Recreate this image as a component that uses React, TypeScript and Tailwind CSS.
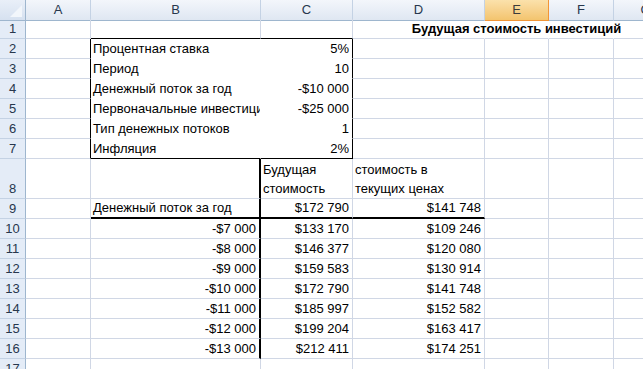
import React from "react"

type Edge = "grid" | "black" | "thick" | "white" | "none"

const rEdge: Record<Edge, string> = {
  grid: "border-r border-r-[#d0d7e5]",
  black: "border-r border-r-black",
  thick: "border-r-2 border-r-black",
  white: "border-r border-r-white",
  none: "border-r border-r-transparent",
}

const bEdge: Record<Edge, string> = {
  grid: "border-b border-b-[#d0d7e5]",
  black: "border-b border-b-black",
  thick: "border-b-2 border-b-black",
  white: "border-b border-b-white",
  none: "border-b border-b-transparent",
}

interface CellDef {
  text?: React.ReactNode
  align?: "left" | "right" | "center"
  bold?: boolean
  r?: Edge
  b?: Edge
  overflow?: boolean
}

const cols = ["A", "B", "C", "D", "E", "F", "G"]

function Cell({ c }: { c: CellDef }) {
  const align =
    c.align === "right" ? "justify-end pr-[3px]" : c.align === "center" ? "justify-center" : "justify-start pl-[2px]"
  return (
    <div
      className={`flex items-end ${align} ${rEdge[c.r ?? "grid"]} ${bEdge[c.b ?? "grid"]} ${
        c.overflow ? "overflow-visible" : "overflow-hidden"
      } whitespace-nowrap leading-[19px] ${c.bold ? "font-bold" : ""}`}
    >
      {c.text != null && <span className={c.overflow ? "shrink-0" : ""}>{c.text}</span>}
    </div>
  )
}

const blank = (): CellDef => ({})

function buildRows(): { h: string; cells: CellDef[] }[] {
  const rows: { h: string; cells: CellDef[] }[] = []
  // row 1
  rows.push({
    h: "h-[20px]",
    cells: [
      blank(),
      { b: "black" },
      { b: "black" },
      { r: "none" },
      { text: "Будущая стоимость инвестиций", bold: true, align: "center", r: "none", overflow: true },
      { r: "none" },
      blank(),
    ],
  })
  const box: [string, string][] = [
    ["Процентная ставка", "5%"],
    ["Период", "10"],
    ["Денежный поток за год", "-$10 000"],
    ["Первоначальные инвестиции", "-$25 000"],
    ["Тип денежных потоков", "1"],
    ["Инфляция", "2%"],
  ]
  box.forEach(([label, val], i) => {
    const last = i === box.length - 1
    rows.push({
      h: "h-[20px]",
      cells: [
        { r: "black" },
        { text: label, r: "white", b: last ? "black" : "white" },
        { text: val, align: "right", r: "black", b: last ? "black" : "white" },
        blank(),
        blank(),
        blank(),
        blank(),
      ],
    })
  })
  // row 8
  rows.push({
    h: "h-[40px]",
    cells: [
      blank(),
      { r: "thick" },
      {
        text: (
          <span className="block whitespace-normal">
            Будущая
            <br />
            стоимость
          </span>
        ),
      },
      {
        text: (
          <span className="block whitespace-normal">
            стоимость в
            <br />
            текущих ценах
          </span>
        ),
      },
      blank(),
      blank(),
      blank(),
    ],
  })
  // row 9
  rows.push({
    h: "h-[20px]",
    cells: [
      blank(),
      { text: "Денежный поток за год", r: "thick", b: "thick" },
      { text: "$172 790", align: "right", b: "thick" },
      { text: "$141 748", align: "right", b: "thick" },
      blank(),
      blank(),
      blank(),
    ],
  })
  const table: [string, string, string][] = [
    ["-$7 000", "$133 170", "$109 246"],
    ["-$8 000", "$146 377", "$120 080"],
    ["-$9 000", "$159 583", "$130 914"],
    ["-$10 000", "$172 790", "$141 748"],
    ["-$11 000", "$185 997", "$152 582"],
    ["-$12 000", "$199 204", "$163 417"],
    ["-$13 000", "$212 411", "$174 251"],
  ]
  table.forEach(([a, b, c]) => {
    rows.push({
      h: "h-[20px]",
      cells: [
        blank(),
        { text: a, align: "right", r: "thick" },
        { text: b, align: "right" },
        { text: c, align: "right" },
        blank(),
        blank(),
        blank(),
      ],
    })
  })
  rows.push({ h: "h-[20px]", cells: cols.map(() => blank()) })
  return rows
}

const gridCols = "grid grid-cols-[26px_65px_170px_92px_132px_64px_65px_64px]"

export default function App() {
  const rows = buildRows()
  return (
    <div
      className="w-[643px] h-[369px] overflow-hidden bg-white text-[13px] text-black"
      style={{ fontFamily: '"Liberation Sans", Arial, sans-serif' }}
    >
      {/* column headers */}
      <div className={`${gridCols} h-[19px]`}>
        <div className="relative bg-gradient-to-b from-[#e9eff8] to-[#d6e1f0] border-r border-b border-[#9eb6ce]">
          <div className="absolute right-[3px] bottom-[3px] w-0 h-0 border-l-[12px] border-l-transparent border-b-[12px] border-b-[#f2f6fb]" />
        </div>
        {cols.map((c) => (
          <div
            key={c}
            className={`flex items-center justify-center border-r border-b text-[13px] ${
              c === "E"
                ? "bg-gradient-to-b from-[#fbe1ab] to-[#f3c46e] border-[#f29536] text-[#3b3b3b]"
                : "bg-gradient-to-b from-[#f3f6fb] to-[#dfe7f2] border-r-[#c4d2e4] border-b-[#9eb6ce] text-[#27374d]"
            }`}
          >
            {c}
          </div>
        ))}
      </div>
      {rows.map((row, i) => (
        <div key={i} className={`${gridCols} ${row.h}`}>
          <div className="flex items-end justify-center leading-[19px] bg-[#e4ecf7] border-r border-r-[#9eb6ce] border-b border-b-[#c4d2e4] text-[#27374d]">
            {i + 1}
          </div>
          {row.cells.map((c, j) => (
            <Cell key={j} c={c} />
          ))}
        </div>
      ))}
    </div>
  )
}
